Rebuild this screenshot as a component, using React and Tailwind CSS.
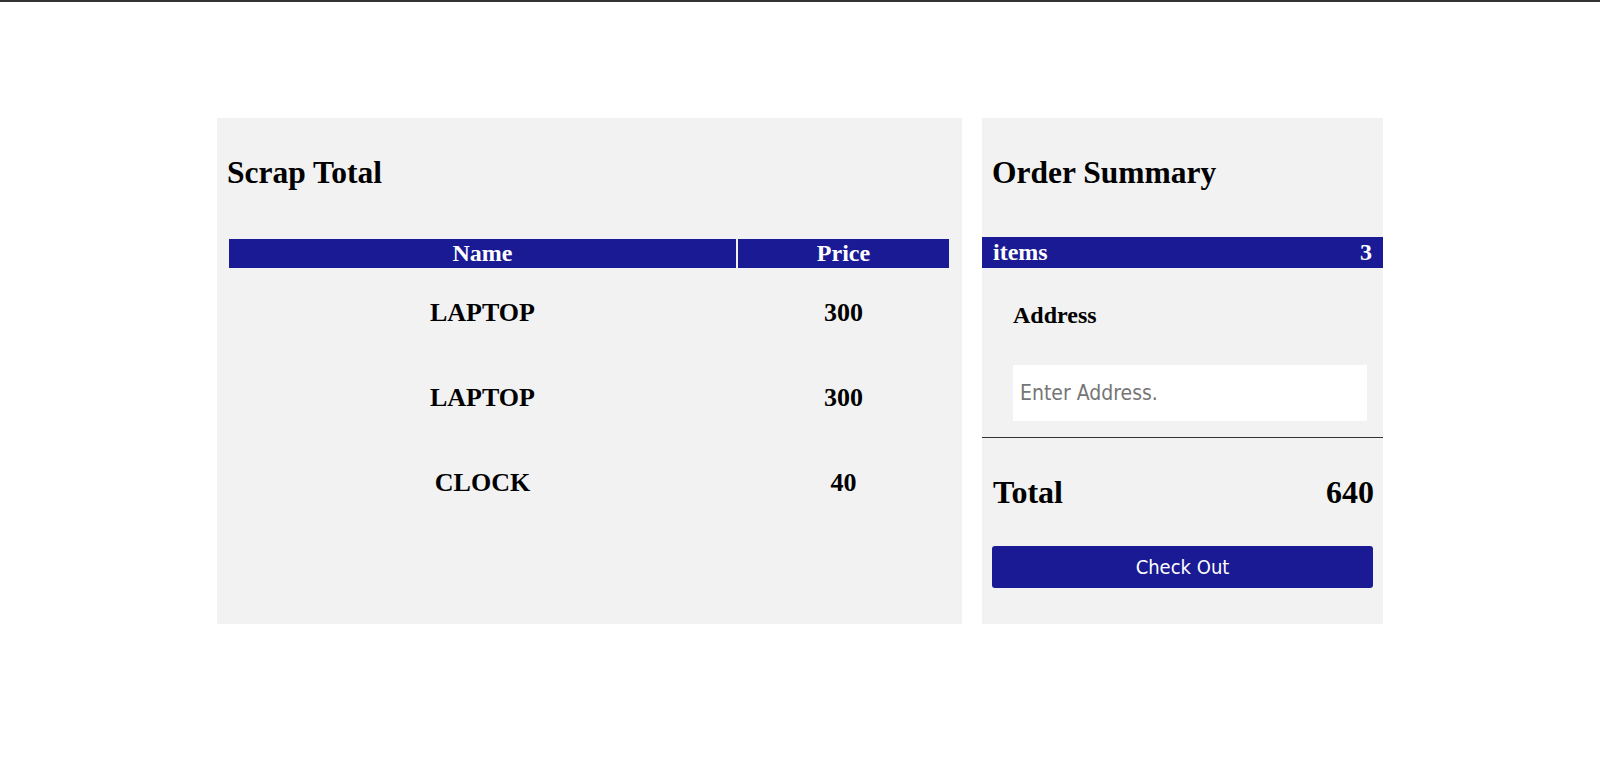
export default function App() {
  const rows = [
    { name: "LAPTOP", price: 300 },
    { name: "LAPTOP", price: 300 },
    { name: "CLOCK", price: 40 },
  ];
  return (
    <div className="min-h-screen bg-white">
      <div className="h-[2px] bg-[#333333]" />
      <div className="flex justify-center gap-[20px] pt-[116px] font-['Liberation_Serif','Times_New_Roman',serif] text-black">
        <div className="w-[745px] h-[506px] bg-[#f2f2f2] px-[10px] pt-[37px]">
          <h1 className="text-[31.5px] leading-[36px] font-bold">Scrap Total</h1>
          <div className="mt-[48px] ml-[2px] w-[720px]">
            <div className="flex h-[29px] bg-[#1a1a94] text-white text-[24px] leading-[29px] font-bold">
              <div className="w-[507px] text-center">Name</div>
              <div className="w-[2px] bg-[#f2f2f2]" />
              <div className="flex-1 text-center">Price</div>
            </div>
            <div className="pt-[2px]">
              {rows.map((r, i) => (
                <div key={i} className="flex h-[85px] text-[26px] leading-[85px] font-bold">
                  <div className="w-[507px] text-center">{r.name}</div>
                  <div className="w-[2px]" />
                  <div className="flex-1 text-center">{r.price}</div>
                </div>
              ))}
            </div>
          </div>
        </div>

        <div className="w-[401px] h-[506px] bg-[#f2f2f2] pt-[37px]">
          <h1 className="px-[10px] text-[31.5px] leading-[36px] font-bold">Order Summary</h1>
          <div className="mt-[46px] h-[31px] px-[11px] flex justify-between bg-[#1a1a94] text-white text-[24px] leading-[31px] font-bold">
            <span>items</span>
            <span>3</span>
          </div>
          <div className="mt-[33px] ml-[31px] text-[24px] leading-[28px] font-bold">Address</div>
          <input
            type="text"
            placeholder="Enter Address."
            className="block mt-[36px] ml-[31px] w-[354px] h-[56px] pl-[7px] bg-white text-[21px] outline-none placeholder:text-[#757575] font-['DejaVu_Sans_Condensed','Noto_Sans',sans-serif]"
          />
          <div className="mt-[16px] h-[1px] bg-[#333333]" />
          <div className="mt-[36px] pl-[11px] pr-[9px] flex justify-between text-[32px] leading-[36px] font-bold">
            <span>Total</span>
            <span>640</span>
          </div>
          <button className="mt-[36px] ml-[10px] w-[381px] h-[42px] rounded-[3px] bg-[#1a1a94] text-white text-[20px] flex items-center justify-center font-['DejaVu_Sans_Condensed','Noto_Sans',sans-serif]">
            Check Out
          </button>
        </div>
      </div>
    </div>
  );
}
